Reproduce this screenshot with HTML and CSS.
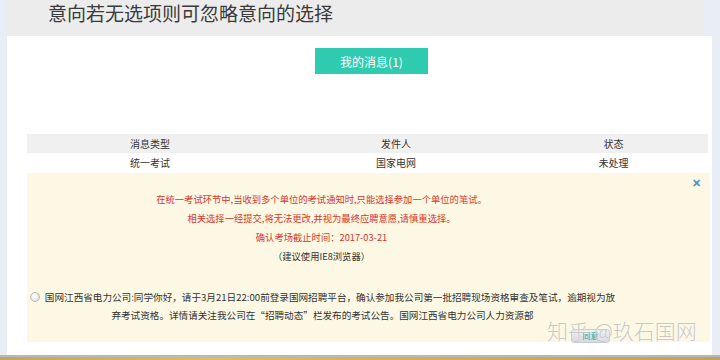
FILE: index.html
```html
<!DOCTYPE html>
<html lang="zh-CN">
<head>
    <meta charset="UTF-8">
    <title>我的消息</title>
    <link rel="stylesheet" href="styles.css">
</head>
<body>
    <div class="page">
        <div class="topbar">
            <h2 class="title">意向若无选项则可忽略意向的选择</h2>
        </div>
        <div class="panel">
            <button class="msg-btn">我的消息(1)</button>
            <table class="msg-table">
                <tr class="head">
                    <td class="c1">消息类型</td>
                    <td class="c2">发件人</td>
                    <td class="c3">状态</td>
                </tr>
                <tr>
                    <td>统一考试</td>
                    <td>国家电网</td>
                    <td>未处理</td>
                </tr>
            </table>
            <div class="notice">
                <span class="close">&#x2715;</span>
                <div class="warn">
                    <p class="red">在统一考试环节中,当收到多个单位的考试通知时,只能选择参加一个单位的笔试。</p>
                    <p class="red">相关选择一经提交,将无法更改,并视为最终应聘意愿,请慎重选择。</p>
                    <p class="red">确认考场截止时间：2017-03-21</p>
                    <p>（建议使用IE8浏览器）</p>
                </div>
                <div class="message">
                    <span class="radio"></span>国网江西省电力公司:同学你好，请于3月21日22:00前登录国网招聘平台，确认参加我公司第一批招聘现场资格审查及笔试，逾期视为放<br>弃考试资格。详情请关注我公司在“招聘动态”栏发布的考试公告。国网江西省电力公司人力资源部
                </div>
                <div class="actions">
                    <button class="agree">同意</button>
                </div>
                <div class="watermark">知乎 @玖石国网</div>
            </div>
        </div>
        <div class="desktop"></div>
    </div>
</body>
</html>
```

FILE: styles.css
```css
body {
    margin: 0;
    background: #e9eef6;
    font-family: "Noto Sans CJK SC", "Liberation Sans", sans-serif;
    color: #333;
}
.page {
    width: 720px;
    height: 360px;
    overflow: hidden;
    display: flex;
    flex-direction: column;
}
.topbar {
    height: 36px;
    flex-shrink: 0;
    margin: 0 17px 0 5px;
    background: #ececec;
}
.title {
    margin: 0;
    padding: 1px 0 0 43px;
    font-size: 19px;
    font-weight: normal;
    line-height: 24px;
    color: #3a3a3a;
}
.panel {
    height: 307px;
    flex-shrink: 0;
    margin: 0 8px 0 7px;
    padding: 12px 2px 0 20px;
    background: #fff;
}
.msg-btn {
    display: block;
    width: 113px;
    height: 26px;
    margin-left: 288px;
    border: none;
    background: #2ecbb0;
    color: #fff;
    font-family: inherit;
    font-size: 12px;
    padding: 0;
}
.msg-table {
    width: 681px;
    margin-top: 60px;
    border-collapse: collapse;
    font-size: 10px;
}
.msg-table td {
    text-align: center;
    height: 19px;
    padding: 0;
}
.msg-table .head td {
    background: #f0f0f0;
}
.msg-table .c1, .msg-table .c2 {
    width: 246px;
}
.notice {
    position: relative;
    height: 169px;
    margin-top: 1px;
    background: #fcf8e3;
    box-sizing: border-box;
    padding-top: 17px;
}
.close {
    position: absolute;
    right: 9px;
    top: 1px;
    color: #4a8fc9;
    font-size: 11px;
    font-weight: bold;
}
.warn {
    padding-right: 94px;
    text-align: center;
    font-size: 9.3px;
    line-height: 19px;
}
.warn p {
    margin: 0;
}
.red {
    color: #d8362c;
}
.message {
    margin-top: 22px;
    padding-right: 92px;
    text-align: center;
    font-size: 9.6px;
    line-height: 18px;
}
.radio {
    display: inline-block;
    width: 8px;
    height: 8px;
    margin-right: 5px;
    vertical-align: -1px;
    border: 1px solid #b8b8b8;
    border-radius: 50%;
    background: radial-gradient(circle at 40% 40%, #fff, #d8d8d8);
}
.actions {
    display: flex;
    margin-top: 5px;
    padding-left: 544px;
}
.agree {
    width: 39px;
    height: 14px;
    padding: 0;
    border: 1px solid #c8ccd2;
    border-radius: 3px;
    background: linear-gradient(#eef1f4, #d6dbe1);
    color: #2a9a8c;
    font-family: inherit;
    font-size: 8px;
    line-height: 12px;
}
.watermark {
    position: absolute;
    left: 520px;
    bottom: -3px;
    font-size: 21px;
    font-weight: 300;
    color: rgba(185, 185, 185, 0.8);
    text-shadow: 0 0 1px #fff;
    white-space: nowrap;
}
.desktop {
    height: 5px;
    flex-shrink: 0;
    border-top: 2px solid #b3b9be;
    box-sizing: border-box;
    background: linear-gradient(90deg, #c9a552, #e2bd55 30%, #d6ae4a 60%, #c8a24e 100%);
}
```
